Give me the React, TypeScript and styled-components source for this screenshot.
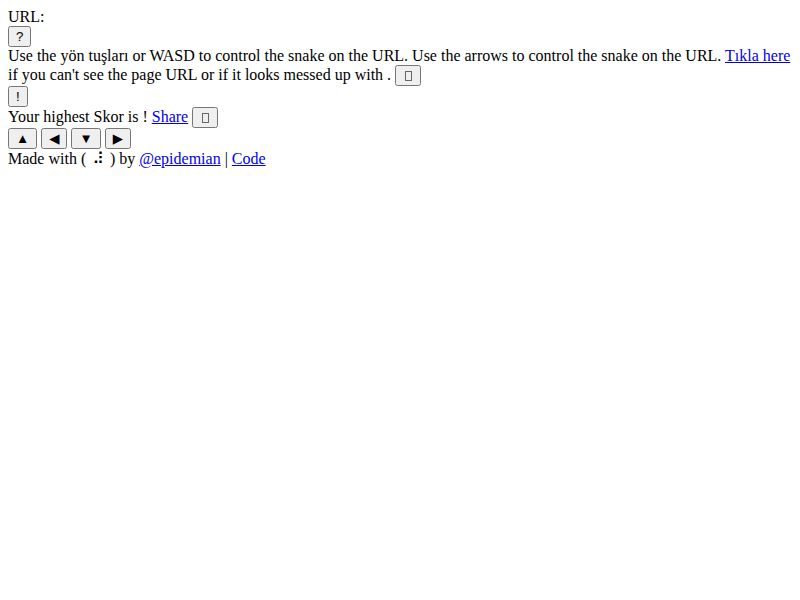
import { FC } from 'react';
import styled, { createGlobalStyle } from 'styled-components';

const GlobalStyle = createGlobalStyle`
  body {
    margin: 8px;
    font-family: 'Liberation Serif', 'Times New Roman', serif;
    font-size: 16px;
    color: #000;
    background: #fff;
  }
  a {
    color: #0000ee;
  }
`;

const Line = styled.div``;

const Button = styled.button`
  font-family: 'Liberation Sans', 'DejaVu Sans', sans-serif;
  font-size: 13.333px;
`;

// missing-glyph box, as the browser draws it
const Tofu = styled.span`
  display: inline-block;
  width: 5px;
  height: 8px;
  margin: 0 1.5px;
  border: 1px solid #666;
  vertical-align: -1px;
`;

const Braille = styled.span`
  font-family: 'DejaVu Sans', sans-serif;
  padding: 0 2px;
`;

const Controls = styled.div`
  display: flex;
  gap: 4px;
`;

const App: FC = () => (
  <>
    <GlobalStyle />
    <Line>URL: </Line>
    <Button>?</Button>
    <Line>
      Use the yön tuşları or WASD to control the snake on the URL. Use the
      arrows to control the snake on the URL. <a href="#">Tıkla here</a> if you
      can't see the page URL or if it looks messed up with .{' '}
      <Button>
        <Tofu />
      </Button>
    </Line>
    <Button>!</Button>
    <Line>
      Your highest Skor is ! <a href="#">Share</a>{' '}
      <Button>
        <Tofu />
      </Button>
    </Line>
    <Controls>
      <Button>▲</Button>
      <Button>◀</Button>
      <Button>▼</Button>
      <Button>▶</Button>
    </Controls>
    <Line>
      Made with ( <Braille>⠼</Braille> ) by <a href="#">@epidemian</a> |{' '}
      <a href="#">Code</a>
    </Line>
  </>
);

export default App;
